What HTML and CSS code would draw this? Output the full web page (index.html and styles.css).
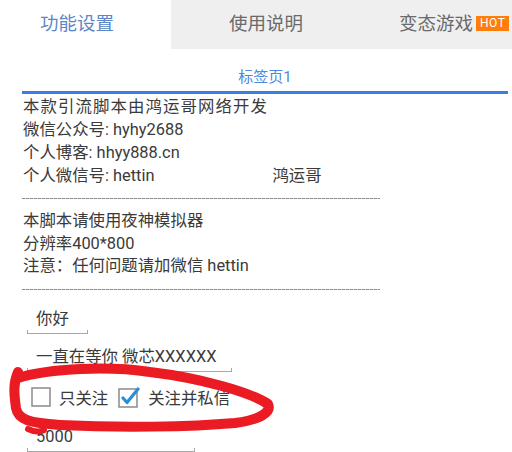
FILE: index.html
```html
<!DOCTYPE html>
<html>
<head>
    <title>功能设置</title>
    <meta charset="UTF-8">
    <link rel="stylesheet" href="styles.css">
</head>
<body>
    <div class="tabs">
        <div class="tab tab-1 active">功能设置</div>
        <div class="tab tab-2">使用说明</div>
        <div class="tab tab-3">变态游戏<span class="hot">HOT</span></div>
    </div>

    <div class="page">
        <div class="page-title">标签页1</div>
        <div class="page-line"></div>

        <div class="info">
            <div class="first">本款引流脚本由鸿运哥网络开发</div>
            <div>微信公众号: hyhy2688</div>
            <div>个人博客: hhyy888.cn</div>
            <div class="row">个人微信号: hettin<span class="name">鸿运哥</span></div>
        </div>
        <div class="dash"></div>

        <div class="info info-2">
            <div>本脚本请使用夜神模拟器</div>
            <div>分辨率400*800</div>
            <div>注意：任何问题请加微信 hettin</div>
        </div>
        <div class="dash"></div>

        <div class="field field-1">
            <div class="field-text">你好</div>
            <div class="field-line"></div>
        </div>
        <div class="field field-2">
            <div class="field-text">一直在等你 微芯XXXXXX</div>
            <div class="field-line"></div>
        </div>

        <div class="checks">
            <div class="check">
                <svg width="20" height="20" viewBox="0 0 20 20"><rect x="1" y="1" width="18" height="18" fill="#fff" stroke="#8a8a8a" stroke-width="1.5"/></svg>
                <span>只关注</span>
            </div>
            <div class="check">
                <svg width="22" height="22" viewBox="0 0 22 22"><rect x="1" y="3" width="18" height="18" fill="#fff" stroke="#8a8a8a" stroke-width="1.5"/><path d="M5 12 L9 16.5 L20 3" fill="none" stroke="#2a8ed6" stroke-width="3.2" stroke-linecap="round" stroke-linejoin="round"/></svg>
                <span>关注并私信</span>
            </div>
        </div>

        <div class="field field-3">
            <div class="field-text">5000</div>
            <div class="field-line"></div>
        </div>
    </div>

    <!-- 红色手绘圈 -->
    <svg class="scribble" width="512" height="452" viewBox="0 0 512 452">
        <path d="M18 378 C 50 368, 110 366, 150 372 C 200 378, 250 392, 268 404 C 272 413, 258 420, 235 423 C 190 427, 120 428, 60 425 C 30 423, 18 420, 16 408 C 14 394, 13 383, 18 372"
              fill="none" stroke="#ea1b23" stroke-width="10" stroke-linecap="round" stroke-linejoin="round"/>
        <path d="M28 429 C 34 432, 40 432, 44 430" fill="none" stroke="#ea1b23" stroke-width="6" stroke-linecap="round"/>
    </svg>
</body>
</html>
```

FILE: styles.css
```css
body { margin: 0; background: #fff; font-family: Roboto, "Noto Sans CJK SC", sans-serif; color: #3a3a3a; width: 512px; height: 452px; overflow: hidden; }

.tabs { display: flex; height: 49px; background: #efefef; }
.tab { font-size: 18.5px; line-height: 49px; color: #6a6a6a; white-space: nowrap; display: flex; align-items: center; }
.tab.active { background: #fff; color: #5b86c8; }
.tab-1 { width: 171px; padding-left: 40px; box-sizing: border-box; }
.tab-2 { width: 189px; padding-left: 58px; box-sizing: border-box; }
.tab-3 { padding-left: 39px; }
.hot { background: #ff7d0a; color: #fff; font-size: 12px; line-height: 15px; padding: 0 4px; margin-left: 3px; margin-top: -2px; letter-spacing: 0.5px; }

.page { padding: 0 4px 0 22px; }
.page-title { margin-top: 18px; text-align: center; font-size: 15px; line-height: 20px; color: #4b88de; }
.page-line { margin-top: 4px; height: 3px; background: #3a7fe0; }

.info { margin-top: 1px; font-size: 16.4px; line-height: 23px; padding-left: 1px; }
.info .first { letter-spacing: 1.1px; }
.info .name { margin-left: 118px; }
.info-2 { margin-top: 11px; line-height: 22.5px; }

.dash { width: 358px; height: 1px; margin-top: 11px; background: repeating-linear-gradient(90deg, #8c8c8c 0 3px, #d0d0d0 3px 4px); }

.field { margin-left: 5px; }
.field-text { font-size: 16.4px; line-height: 22px; padding-left: 9px; white-space: nowrap; }
.field-line { height: 3px; border: 1px solid #a8a8a8; border-top: none; margin-top: 0; }
.field-1 { width: 61px; margin-top: 18px; }
.field-2 { width: 205px; margin-top: 12px; }
.field-3 { width: 168px; margin-top: 17px; }

.checks { display: flex; align-items: center; gap: 10px; margin-top: 13px; margin-left: 9px; height: 24px; }
.check { display: flex; align-items: center; gap: 8px; font-size: 16.4px; }
.check svg { display: block; }

.scribble { position: absolute; left: 0; top: 0; pointer-events: none; }
```
